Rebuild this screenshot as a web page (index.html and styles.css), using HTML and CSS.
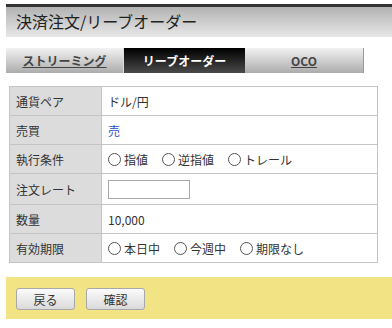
FILE: index.html
```html
<!DOCTYPE html>
<html lang="ja">
<head>
    <meta charset="UTF-8">
    <meta name="viewport" content="width=device-width, initial-scale=1.0">
    <title>決済注文/リーブオーダー</title>
    <link rel="stylesheet" href="styles.css">
</head>
<body>
    <div class="page">
        <h1 class="page-title">決済注文/リーブオーダー</h1>

        <div class="tabs">
            <a class="tab" href="#">ストリーミング</a>
            <span class="tab active">リーブオーダー</span>
            <a class="tab" href="#">OCO</a>
        </div>

        <table class="order-table">
            <tr>
                <th>通貨ペア</th>
                <td>ドル/円</td>
            </tr>
            <tr>
                <th>売買</th>
                <td class="sell">売</td>
            </tr>
            <tr>
                <th>執行条件</th>
                <td>
                    <div class="options">
                        <label class="option"><span class="radio"></span>指値</label>
                        <label class="option"><span class="radio"></span>逆指値</label>
                        <label class="option"><span class="radio"></span>トレール</label>
                    </div>
                </td>
            </tr>
            <tr class="input-row">
                <th>注文レート</th>
                <td><input type="text" class="rate-input"></td>
            </tr>
            <tr>
                <th>数量</th>
                <td>10,000</td>
            </tr>
            <tr>
                <th>有効期限</th>
                <td>
                    <div class="options">
                        <label class="option"><span class="radio"></span>本日中</label>
                        <label class="option"><span class="radio"></span>今週中</label>
                        <label class="option"><span class="radio"></span>期限なし</label>
                    </div>
                </td>
            </tr>
        </table>

        <div class="actions">
            <button class="btn">戻る</button>
            <button class="btn">確認</button>
        </div>
    </div>
</body>
</html>
```

FILE: styles.css
```css
* {
    margin: 0;
    padding: 0;
    box-sizing: border-box;
}

body {
    background-color: white;
    color: #333;
    font-family: "Noto Sans CJK JP", "DejaVu Sans", sans-serif;
    font-size: 12px;
}

.page {
    padding: 4px 0 0 6px;
}

.page-title {
    height: 33px;
    border-top: 3px solid #333;
    background: linear-gradient(to bottom, #b2b2b2, #e8e8e8);
    padding-left: 10px;
    font-size: 16px;
    font-weight: normal;
    line-height: 29px;
    color: #222;
}

.tabs {
    display: flex;
    margin-top: 11px;
    height: 25px;
}

.tab {
    display: block;
    text-align: center;
    line-height: 25px;
    font-size: 12px;
    font-weight: bold;
    color: #444;
    background: linear-gradient(to bottom, #f2f2f2, #acacac);
}

.tab:nth-child(1) {
    width: 118px;
    border-right: 1px solid #ddd;
}

.tab:nth-child(2) {
    width: 121px;
}

.tab:nth-child(3) {
    width: 119px;
    border-right: 1px solid #999;
}

.tab.active {
    color: white;
    background: linear-gradient(to bottom, #000, #4a4a4a);
}

.order-table {
    margin: 13px 0 0 3px;
    width: 369px;
    border-collapse: collapse;
}

.order-table th,
.order-table td {
    height: 29px;
    border: 1px solid #c4c4c4;
    padding: 0 6px;
    text-align: left;
    font-weight: normal;
    color: #333;
}

.order-table th {
    width: 92px;
    background-color: #dcdcdc;
    padding-left: 6px;
}

.order-table .input-row th,
.order-table .input-row td {
    height: 31px;
}

.order-table .sell {
    color: #2a52c8;
}

.options {
    display: flex;
    gap: 14px;
}

.option {
    display: flex;
    align-items: center;
    gap: 3px;
}

.radio {
    width: 13px;
    height: 13px;
    border: 1px solid #555;
    border-radius: 50%;
    background: white;
}

.rate-input {
    width: 82px;
    height: 19px;
    border: 1px solid #aaa;
    font-size: 12px;
}

.actions {
    display: flex;
    gap: 11px;
    margin-top: 14px;
    height: 42px;
    padding: 11px 10px;
    background-color: #f2e485;
}

.btn {
    width: 59px;
    height: 22px;
    border: 1px solid #a8a8a8;
    border-radius: 3px;
    background: linear-gradient(to bottom, #fbfbfb, #dadada);
    font-family: "Noto Sans CJK JP", "DejaVu Sans", sans-serif;
    font-size: 12px;
    color: #333;
}
```
